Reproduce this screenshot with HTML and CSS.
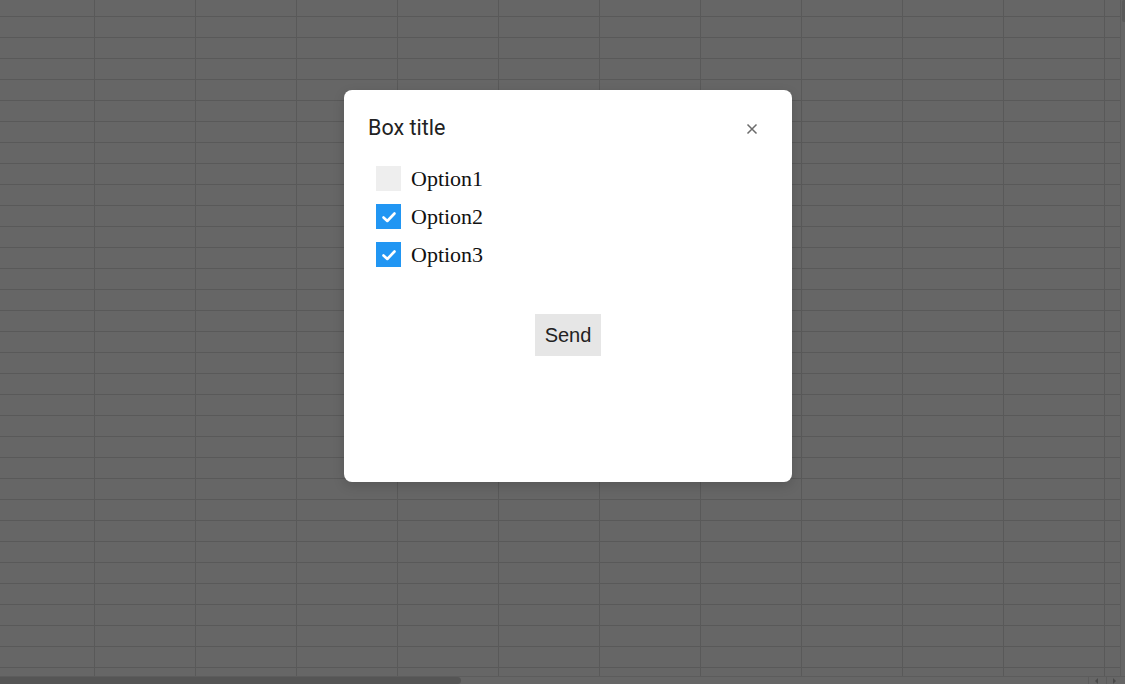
FILE: index.html
```html
<!DOCTYPE html>
<html>
<head>
<meta charset="utf-8">
<link rel="stylesheet" href="styles.css">
</head>
<body>
<div class="sheet">
  <div class="main">
    <div class="grid"></div>
    <div class="vscroll"><div class="vthumb"></div></div>
  </div>
  <div class="hbar">
    <div class="htrack"><div class="hthumb"></div></div>
    <div class="arrows">
      <span class="arrow left"></span>
      <span class="arrow right"></span>
    </div>
  </div>
</div>

<div class="dialog">
  <div class="dialog-head">
    <h1 class="dialog-title">Box title</h1>
    <button class="close" aria-label="Close">
      <svg width="12" height="12" viewBox="0 0 12 12"><path d="M1.5 1.5L10.5 10.5M10.5 1.5L1.5 10.5" stroke="#6b6b6b" stroke-width="1.5" fill="none"/></svg>
    </button>
  </div>
  <div class="dialog-body">
    <label class="opt"><span class="box"></span><span class="opt-text">Option1</span></label>
    <label class="opt"><span class="box checked"><svg width="16" height="16" viewBox="0 0 16 16"><path d="M2.5 8.5L6.3 12L13.5 4.5" stroke="#fff" stroke-width="2.6" fill="none" stroke-linecap="round" stroke-linejoin="round"/></svg></span><span class="opt-text">Option2</span></label>
    <label class="opt"><span class="box checked"><svg width="16" height="16" viewBox="0 0 16 16"><path d="M2.5 8.5L6.3 12L13.5 4.5" stroke="#fff" stroke-width="2.6" fill="none" stroke-linecap="round" stroke-linejoin="round"/></svg></span><span class="opt-text">Option3</span></label>
    <div class="actions"><button class="send">Send</button></div>
  </div>
</div>
</body>
</html>
```

FILE: styles.css
```css
* { box-sizing: border-box; }
html, body { margin: 0; padding: 0; }
body {
  width: 1125px;
  height: 684px;
  overflow: hidden;
  background: #666666;
  font-family: "Liberation Sans", Arial, sans-serif;
}
.sheet {
  display: flex;
  flex-direction: column;
  width: 1125px;
  height: 684px;
}
.main {
  display: flex;
  height: 676px;
}
.grid {
  width: 1121px;
  height: 676px;
  background-color: #666666;
  background-image:
    linear-gradient(to right, transparent 94px, #595959 94px, #595959 95px, transparent 95px),
    linear-gradient(to bottom, transparent 16px, #595959 16px, #595959 17px, transparent 17px);
  background-size: 101px 100%, 100% 21px;
  border-right: 1px solid #5c5c5c;
}
.vscroll {
  width: 4px;
  height: 676px;
  position: relative;
}
.vthumb {
  width: 3px;
  height: 22px;
  margin-left: 1px;
  background: #5a5a5a;
  border-radius: 2px 0 0 2px;
}
.hbar {
  display: flex;
  height: 8px;
  border-top: 1px solid #5c5c5c;
}
.htrack {
  flex: 1;
  height: 7px;
}
.hthumb {
  width: 461px;
  height: 7px;
  background: #555555;
  border-radius: 0 4px 4px 0;
}
.arrows {
  display: flex;
  width: 37px;
}
.arrow {
  width: 18px;
  border-left: 1px solid #5c5c5c;
  position: relative;
}
.arrow::after {
  content: "";
  position: absolute;
  top: 1px;
  left: 6px;
  border-top: 3px solid transparent;
  border-bottom: 3px solid transparent;
}
.arrow.left::after { border-right: 3px solid #4a4a4a; }
.arrow.right::after { border-left: 3px solid #4a4a4a; }

.dialog {
  position: absolute;
  left: 344px;
  top: 90px;
  width: 448px;
  height: 392px;
  background: #ffffff;
  border-radius: 8px;
  box-shadow: 0 4px 12px rgba(0,0,0,0.15);
}
.dialog-head {
  display: flex;
  align-items: center;
  justify-content: space-between;
  padding: 24px 28px 0 24px;
  height: 52px;
}
.dialog-title {
  margin: 0;
  font-family: Roboto, "Noto Sans", sans-serif;
  font-weight: 400;
  font-size: 21.5px;
  color: #222222;
  line-height: 28px;
}
.close {
  border: none;
  background: none;
  padding: 0;
  width: 24px;
  height: 24px;
  display: flex;
  align-items: center;
  justify-content: center;
  margin-top: 1px;
}
.dialog-body {
  padding: 24px 0 0 32px;
  display: flex;
  flex-direction: column;
  gap: 13px;
}
.opt {
  display: flex;
  align-items: center;
  gap: 10px;
  height: 25px;
}
.box {
  width: 25px;
  height: 25px;
  background: #eeeeee;
  display: flex;
  align-items: center;
  justify-content: center;
}
.box.checked { background: #2196f3; }
.opt-text {
  font-family: "Liberation Serif", "Times New Roman", serif;
  font-size: 22px;
  color: #111111;
}
.actions {
  display: flex;
  justify-content: center;
  padding-right: 32px;
  margin-top: 34px;
}
.send {
  font-family: "Liberation Sans", Arial, sans-serif;
  font-size: 20px;
  color: #222222;
  background: #e6e6e6;
  border: none;
  padding: 0 10px;
  height: 42px;
  line-height: 42px;
}
```
